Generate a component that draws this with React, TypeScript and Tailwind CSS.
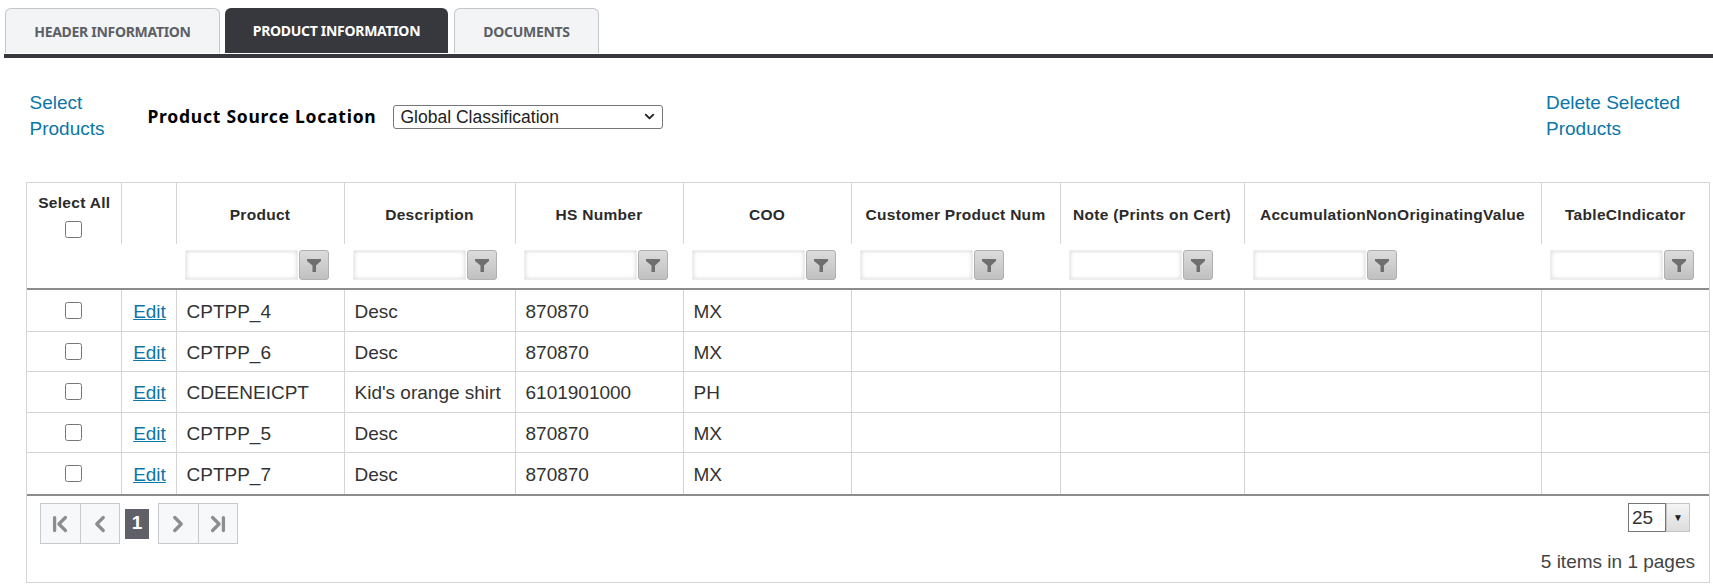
import { ChevronDown, ChevronFirst, ChevronLast, ChevronLeft, ChevronRight } from 'lucide-react';

const columns = [
  { label: 'Product', width: 'w-[168px]' },
  { label: 'Description', width: 'w-[171px]' },
  { label: 'HS Number', width: 'w-[168px]' },
  { label: 'COO', width: 'w-[168px]' },
  { label: 'Customer Product Num', width: 'w-[209px]' },
  { label: 'Note (Prints on Cert)', width: 'w-[184px]' },
  { label: 'AccumulationNonOriginatingValue', width: 'w-[297px]' },
  { label: 'TableCIndicator', width: 'w-[168px]' },
];

// row heights and text offsets differ a little from row to row in the original
const rows = [
  { product: 'CPTPP_4', description: 'Desc', hs: '870870', coo: 'MX', height: 'h-[42px]', pad: 'pt-[3px]' },
  { product: 'CPTPP_6', description: 'Desc', hs: '870870', coo: 'MX', height: 'h-[40px]', pad: 'pt-[4px]' },
  { product: 'CDEENEICPT', description: "Kid's orange shirt", hs: '6101901000', coo: 'PH', height: 'h-[41px]', pad: 'pt-[3px]' },
  { product: 'CPTPP_5', description: 'Desc', hs: '870870', coo: 'MX', height: 'h-[40px]', pad: 'pt-[4px]' },
  { product: 'CPTPP_7', description: 'Desc', hs: '870870', coo: 'MX', height: 'h-[42px]', pad: 'pt-[3px]' },
];

function Tab({ label, active, width }: { label: string; active?: boolean; width: string }) {
  return (
    <div
      className={`${width} h-[45px] flex items-center justify-center rounded-t-[6px] font-['Noto_Sans',sans-serif] text-[14px] font-bold tracking-[-0.3px] ${
        active ? 'bg-[#37383d] text-white' : 'bg-[#f3f4f6] text-[#5c5f66] border border-b-0 border-[#c4c6ca]'
      }`}
    >
      {label}
    </div>
  );
}

function FilterCell() {
  return (
    <div className="flex items-center gap-[1.500px]">
      <div className="w-[112.500px] h-[30px] bg-white border border-[#eeeeee] shadow-[inset_0_0_4px_rgba(0,0,0,0.18)]" />
      <button className="w-[30px] h-[30px] flex items-center justify-center rounded-[3px] border border-[#b0b0b0] bg-linear-to-b from-[#dcdcdc] to-[#c0c0c0]">
        <svg width="16" height="16" viewBox="0 0 16 16" fill="#6f6f6f">
          <path d="M1 2h14v2l-5 4.500V15H6.500V8.500L1 4z" />
        </svg>
      </button>
    </div>
  );
}

function PagerButton({ children, className }: { children: React.ReactNode; className?: string }) {
  return (
    <div className={`w-[40.500px] h-[41px] flex items-center justify-center bg-[#f7f8fa] border border-[#c8c9cc] text-[#8d8d8d] ${className ?? ''}`}>
      {children}
    </div>
  );
}

function Checkbox() {
  return <input type="checkbox" className="block mx-auto w-[17px] h-[17px]" />;
}

export default function App() {
  return (
    <div className="w-[1713px] h-[584px] overflow-hidden bg-white font-['Liberation_Sans',sans-serif] text-[#333]">
      <div className="pl-[5px] pt-[8px] flex">
        <Tab label="HEADER INFORMATION" width="w-[215px]" />
        <div className="w-[5px]" />
        <Tab label="PRODUCT INFORMATION" active width="w-[223px]" />
        <div className="w-[6px]" />
        <Tab label="DOCUMENTS" width="w-[145px]" />
      </div>
      <div className="ml-[4px] mt-[1px] h-[4px] bg-[#37383d]" />

      <div className="pl-[29.500px] pr-[26px] pt-[32px] h-[124px] flex items-start">
        <a className="w-[118px] text-[19px] leading-[26px] text-[#0b76a8]">Select Products</a>
        <div className="flex items-center h-[54px]">
          <span className="pb-[2px] font-['Noto_Sans',sans-serif] font-bold text-[17.500px] tracking-[0.75px] text-black">Product Source Location</span>
          <div className="relative ml-[17px]">
            <select className="block appearance-none w-[270px] h-[24px] pl-[6px] text-[17.500px] leading-[22px] text-[#222] border border-[#767676] rounded-[3px] bg-white">
              <option>Global Classification</option>
            </select>
            <ChevronDown size={15} strokeWidth={3} className="absolute right-[6px] top-[4px] text-[#222] pointer-events-none" />
          </div>
        </div>
        <a className="ml-auto w-[141px] text-[19px] leading-[26px] text-[#0b76a8]">Delete Selected Products</a>
      </div>

      <div className="ml-[26px] w-[1684px] h-[401px] border border-[#d5d5d5]">
        <table className="table-fixed border-collapse w-full">
          <thead>
            <tr className="h-[61px]">
              <th className="w-[94px] border-r border-[#d5d5d5] align-top pt-[8px] text-[15.500px] font-bold tracking-[0.3px] text-[#2b2b2b]">
                <div className="pl-[1px] mb-[7px]">Select All</div>
                <Checkbox />
              </th>
              <th className="w-[55px] border-r border-[#d5d5d5]" />
              {columns.map((col, i) => (
                <th
                  key={col.label}
                  className={`${col.width} pt-[3px] text-[15.500px] font-bold tracking-[0.3px] text-[#2b2b2b] ${i < columns.length - 1 ? 'border-r border-[#d5d5d5]' : ''}`}
                >
                  {col.label}
                </th>
              ))}
            </tr>
            <tr className="h-[45px] border-b-2 border-[#8c8c8c]">
              <td />
              <td />
              {columns.map((col) => (
                <td key={col.label} className="pl-[9px] align-top pt-[6px]">
                  <FilterCell />
                </td>
              ))}
            </tr>
          </thead>
          <tbody>
            {rows.map((row, r) => (
              <tr key={row.product} className={`${row.height} ${r < rows.length - 1 ? 'border-b border-[#d5d5d5]' : ''} text-[19px] text-[#333]`}>
                <td className="border-r border-[#d5d5d5]">
                  <Checkbox />
                </td>
                <td className={`border-r border-[#d5d5d5] text-center pl-[2px] ${row.pad}`}>
                  <a className="underline text-[#0b76a8]">Edit</a>
                </td>
                <td className={`pl-[10px] border-r border-[#d5d5d5] ${row.pad}`}>{row.product}</td>
                <td className={`pl-[10px] border-r border-[#d5d5d5] ${row.pad}`}>{row.description}</td>
                <td className={`pl-[10px] border-r border-[#d5d5d5] ${row.pad}`}>{row.hs}</td>
                <td className={`pl-[10px] border-r border-[#d5d5d5] ${row.pad}`}>{row.coo}</td>
                <td className="border-r border-[#d5d5d5]" />
                <td className="border-r border-[#d5d5d5]" />
                <td className="border-r border-[#d5d5d5]" />
                <td />
              </tr>
            ))}
          </tbody>
        </table>

        <div className="border-t-2 border-[#8c8c8c] flex justify-between pl-[13px] pr-[14px] pt-[7px]">
          <div className="flex items-center h-[41px]">
            <PagerButton><ChevronFirst size={26} strokeWidth={3} /></PagerButton>
            <PagerButton className="-ml-px"><ChevronLeft size={26} strokeWidth={3} /></PagerButton>
            <div className="ml-[5px] mr-[9px] w-[24px] h-[30px] bg-[#5f6068] text-white text-[19px] font-bold flex items-center justify-center">1</div>
            <PagerButton><ChevronRight size={26} strokeWidth={3} /></PagerButton>
            <PagerButton className="-ml-px"><ChevronLast size={26} strokeWidth={3} /></PagerButton>
          </div>
          <div className="flex flex-col items-end">
            <div className="flex h-[29px] mr-[5px]">
              <div className="w-[38px] border border-[#767676] text-[19px] leading-[27px] pl-[3px]">25</div>
              <div className="w-[24px] flex items-center justify-center border border-[#c4c4c4] bg-linear-to-b from-[#f4f4f4] to-[#dddddd] text-[10px] text-[#222]">▼</div>
            </div>
            <div className="mt-[18px] text-[19px] leading-[24px] text-[#444]">5 items in 1 pages</div>
          </div>
        </div>
      </div>
    </div>
  );
}
